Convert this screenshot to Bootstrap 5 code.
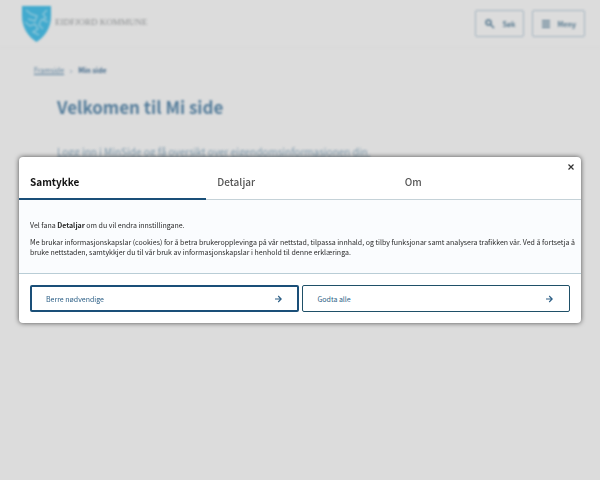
<!DOCTYPE html>
<html lang="nn">
<head>
<meta charset="utf-8">
<meta name="viewport" content="width=device-width, initial-scale=1">
<title>Mi side - Eidfjord kommune</title>
<link href="https://cdn.jsdelivr.net/npm/bootstrap@5.3.0/dist/css/bootstrap.min.css" rel="stylesheet">
<style>
  :root { --ink: #1a4f78; --muted-ink: #597f9c; }
  body { background: #dcdcdc; font-family: "Noto Sans CJK SC", "Noto Sans", sans-serif; font-size: 7px; line-height: 10px; }
  .site { filter: blur(1px); min-height: 100vh; color: var(--muted-ink); }
  .site a { color: inherit; }
  .site-header { height: 48px; border-bottom: 1px solid #d8d8d8; padding: 0 15px 0 22px; }
  .wordmark { font-family: "Liberation Serif", serif; font-size: 9px; color: #8c8f91; margin-top: -4px; }
  .site-header .brand-link { text-decoration: none; }
  .tool-btn { height: 27px; border: 1px solid #a3b4c0; border-radius: 2px; font-size: 7px; font-weight: 700; line-height: 10px; color: #55788f; padding: 0 8px; gap: 6px; }
  .crumbs { padding: 17px 34px 0; gap: 6px; }
  .crumbs .here { font-weight: 700; color: #42698a; }
  .intro { padding: 20px 57px 0; }
  .intro h1 { font-size: 17px; line-height: 24px; font-weight: 700; color: #557d9b; }
  .intro p { font-size: 10px; line-height: 16px; padding-top: 25px; color: #7e99ac; }
  .consent-layer { padding: 0 19px; }
  .consent { border-radius: 4px; background: #fff; box-shadow: 0 0 5px rgba(0,0,0,.65); color: #2a2a2a; }
  .consent-tabs { border-bottom: 1px solid #c5d2d8; }
  .consent-tabs button { height: 43px; margin-bottom: -1px; padding: 9px 11px 0; border: 0; border-bottom: 2px solid transparent; background: none; text-align: left; font-size: 10px; line-height: 14px; font-weight: 500; color: #555; }
  .consent-tabs button.active { color: #141414; font-weight: 700; border-bottom-color: var(--ink); }
  .close-btn { top: 5px; right: 5px; width: 10px; height: 10px; line-height: 0; color: #333; }
  .consent-text { background: #fafcfe; padding: 20px 4px 16px 11px; border-bottom: 1px solid #b9cdd6; }
  .consent-text p { margin: 0 0 7px; }
  .consent-text p:last-child { margin: 0; }
  .consent-actions { padding: 11px; gap: 3px; }
  .choice { height: 27px; border: 1px solid #1f5068; border-radius: 2px; background: #fff; color: #2c5f86; font-size: 7px; line-height: 10px; padding: 0 16px 0 15px; }
  .choice.focused { border: 2px solid var(--ink); padding: 0 15px 0 14px; }
</style>
</head>
<body>
<div class="site">
  <header class="site-header d-flex align-items-center justify-content-between">
    <a href="#" class="brand-link d-flex align-items-center gap-1">
      <svg width="29" height="37" viewBox="0 0 29 37" aria-hidden="true">
        <path d="M0 1H29V11C29 24 22 32 14.500 37C7 32 0 24 0 11Z" fill="#42aace"/>
        <path d="M4 5L9 9L15 11L13 16L6 14M25 5L21 9L24 13L19 15L17 20L21 24M3 17L8 21L13 19L16 24L11 27L17 30M21 15L26 17" fill="none" stroke="#88c4d8" stroke-width="1.500"/>
      </svg>
      <span class="wordmark">EIDFJORD KOMMUNE</span>
    </a>
    <div class="d-flex gap-2">
      <button type="button" class="btn tool-btn d-flex align-items-center">
        <svg width="12" height="12" viewBox="0 0 12 12" fill="none" stroke="currentColor" stroke-width="1.500" aria-hidden="true"><circle cx="4.500" cy="4.500" r="2.500"/><path d="M6.500 6.500L10 10"/></svg>
        Søk
      </button>
      <button type="button" class="btn tool-btn d-flex align-items-center">
        <svg width="10" height="10" viewBox="0 0 10 10" fill="none" stroke="currentColor" stroke-width="1.500" aria-hidden="true"><path d="M1 2H9M1 5H9M1 8H9"/></svg>
        Meny
      </button>
    </div>
  </header>
  <nav class="crumbs d-flex" aria-label="Brødsmular">
    <a href="#">Framside</a><span>›</span><span class="here">Min side</span>
  </nav>
  <main class="intro">
    <h1 class="m-0">Velkomen til Mi side</h1>
    <p class="m-0"><a href="#">Logg inn i MinSide og få oversikt over eigendomsinformasjonen din.</a></p>
  </main>
</div>

<div class="consent-layer position-fixed top-0 start-0 w-100 h-100 d-flex align-items-center">
  <div class="consent position-relative w-100 overflow-hidden" role="dialog" aria-label="Samtykke til informasjonskapslar">
    <div class="consent-tabs d-flex" role="tablist">
      <button type="button" class="active flex-fill w-100" role="tab" aria-selected="true">Samtykke</button>
      <button type="button" class="flex-fill w-100" role="tab" aria-selected="false">Detaljar</button>
      <button type="button" class="flex-fill w-100" role="tab" aria-selected="false">Om</button>
    </div>
    <button type="button" class="close-btn position-absolute border-0 bg-transparent p-0" aria-label="Lukk">
      <svg width="10" height="10" viewBox="0 0 10 10" fill="none" stroke="currentColor" stroke-width="1.200"><path d="M2.500 2.500L7.500 7.500M7.500 2.500L2.500 7.500"/></svg>
    </button>
    <div class="consent-text">
      <p>Vel fana <b>Detaljar</b> om du vil endra innstillingane.</p>
      <p>Me brukar informasjonskapslar (cookies) for å betra brukeropplevinga på vår nettstad, tilpassa innhald, og tilby funksjonar samt analysera trafikken vår. Ved å fortsetja å bruke nettstaden, samtykkjer du til vår bruk av informasjonskapslar i henhold til denne erklæringa.</p>
    </div>
    <div class="consent-actions d-flex">
      <button type="button" class="choice focused w-100 d-flex align-items-center justify-content-between">Berre nødvendige
        <svg width="8" height="8" viewBox="0 0 8 8" fill="none" stroke="currentColor" stroke-width="1.100" aria-hidden="true"><path d="M1 4H7M4.200 1L7.200 4L4.200 7"/></svg>
      </button>
      <button type="button" class="choice w-100 d-flex align-items-center justify-content-between">Godta alle
        <svg width="8" height="8" viewBox="0 0 8 8" fill="none" stroke="currentColor" stroke-width="1.100" aria-hidden="true"><path d="M1 4H7M4.200 1L7.200 4L4.200 7"/></svg>
      </button>
    </div>
  </div>
</div>
<script src="https://cdn.jsdelivr.net/npm/bootstrap@5.3.0/dist/js/bootstrap.bundle.min.js"></script>
</body>
</html>
